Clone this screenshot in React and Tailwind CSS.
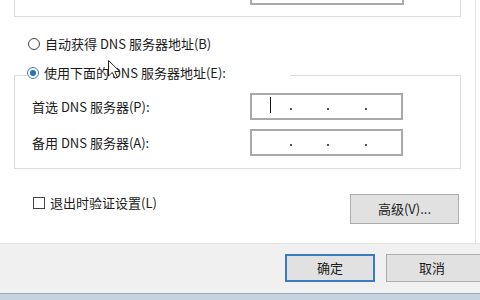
export default function App() {
  const font = { fontFamily: '"Noto Sans CJK SC", "Noto Sans", sans-serif' };
  const Dots = ({ cursor }) => (
    <div className="flex items-start">
      {cursor ? (
        <div className="ml-[18px] mt-[2px] w-px h-[16px] bg-[#111]" />
      ) : (
        <div className="ml-[18px] w-px h-[16px]" />
      )}
      <div className="ml-[19px] mt-[13px] w-[2px] h-[2px] bg-[#555]" />
      <div className="ml-[35px] mt-[13px] w-[2px] h-[2px] bg-[#555]" />
      <div className="ml-[36px] mt-[13px] w-[2px] h-[2px] bg-[#555]" />
    </div>
  );
  return (
    <div
      className="relative w-[480px] h-[300px] overflow-hidden bg-white flex flex-col text-[13px] leading-[16px] text-[#1a1a1a]"
      style={font}
    >
      <div className="flex h-[293px]">
        <div className="w-[2px] bg-[#e6eaef]" />
        <div className="flex-1 flex flex-col">
          <div className="flex h-[243px]">
            <div className="w-[475px] flex flex-col">
              {/* top groupbox remnant */}
              <div className="ml-[14px] w-[447px] h-[17px] border-x border-b border-[#dcdcdc]">
                <div className="ml-[235px] w-[154px] h-[5px] border-x-2 border-b-2 border-[#a9a9a9]" />
              </div>

              {/* radio 1 */}
              <div className="mt-[19px] h-[16px] flex items-center">
                <div className="ml-[28px] w-[12px] h-[12px] rounded-full border border-[#444]" />
                <span className="ml-[5px]">自动获得 DNS 服务器地址(B)</span>
              </div>

              {/* groupbox 2 */}
              <div className="mt-[23px] ml-[14px] w-[447px] border-x border-b border-[#dcdcdc] pb-[12px]">
                <div className="-mt-[10px] h-[16px] flex items-start">
                  <div className="mt-[10px] w-[12px] h-px bg-[#dcdcdc]" />
                  <div className="h-[16px] flex items-center">
                    <div className="w-[12px] h-[12px] rounded-full border border-[#3c7fc7] flex items-center justify-center">
                      <div className="w-[6px] h-[6px] rounded-full bg-[#2a6fc0]" />
                    </div>
                    <span className="ml-[5px]">使用下面的 DNS 服务器地址(E):</span>
                  </div>
                  <div className="flex-1 flex">
                    <div className="ml-auto mt-[10px] w-[170px] h-px bg-[#dcdcdc]" />
                  </div>
                </div>
                <div className="mt-[12px] h-[27px] flex items-center">
                  <span className="pl-[17px] w-[235px]">首选 DNS 服务器(P):</span>
                  <div className="w-[153px] h-[27px] border-2 border-[#a9a9a9]">
                    <Dots cursor />
                  </div>
                </div>
                <div className="mt-[9px] h-[27px] flex items-center">
                  <span className="pl-[17px] w-[235px]">备用 DNS 服务器(A):</span>
                  <div className="w-[153px] h-[27px] border-2 border-[#a9a9a9]">
                    <Dots />
                  </div>
                </div>
              </div>

              {/* checkbox + advanced */}
              <div className="mt-[25px] ml-[14px] w-[447px] flex items-start">
                <div className="mt-[1px] ml-[19px] h-[16px] flex items-center">
                  <div className="w-[12px] h-[12px] border border-[#444] bg-white" />
                  <span className="ml-[5px]">退出时验证设置(L)</span>
                </div>
                <div className="ml-auto mr-[2px] w-[109px] h-[30px] bg-[#e1e1e1] border border-[#adadad] flex items-center justify-center">
                  高级(V)...
                </div>
              </div>
            </div>
            <div className="w-px bg-[#e6e6e6]" />
          </div>

          {/* footer */}
          <div className="h-[50px] bg-[#f0f0f0] border-t border-[#e3e3e3] flex pt-[10px]">
            <div className="ml-[285px] w-[90px] h-[28px] bg-[#e1e1e1] border-2 border-[#3a7bbf] flex items-center justify-center">
              确定
            </div>
            <div className="ml-[11px] w-[100px] h-[28px] bg-[#e1e1e1] border border-[#adadad] flex items-center justify-center pr-[8px]">
              取消
            </div>
          </div>
        </div>
      </div>
      <div className="h-[7px] border-t border-[#9aaabb] bg-[#c6d2de]" />

      {/* mouse pointer */}
      <svg
        className="absolute left-[108px] top-[60px]"
        width="13"
        height="19"
        viewBox="0 0 13 19"
      >
        <path
          d="M0.5 0.5 L0.5 16 L4.3 12.4 L7 18.3 L9.4 17.3 L6.8 11.5 L11.8 11.5 Z"
          fill="white"
          stroke="#222"
          strokeWidth="1"
          strokeLinejoin="round"
        />
      </svg>
    </div>
  );
}
